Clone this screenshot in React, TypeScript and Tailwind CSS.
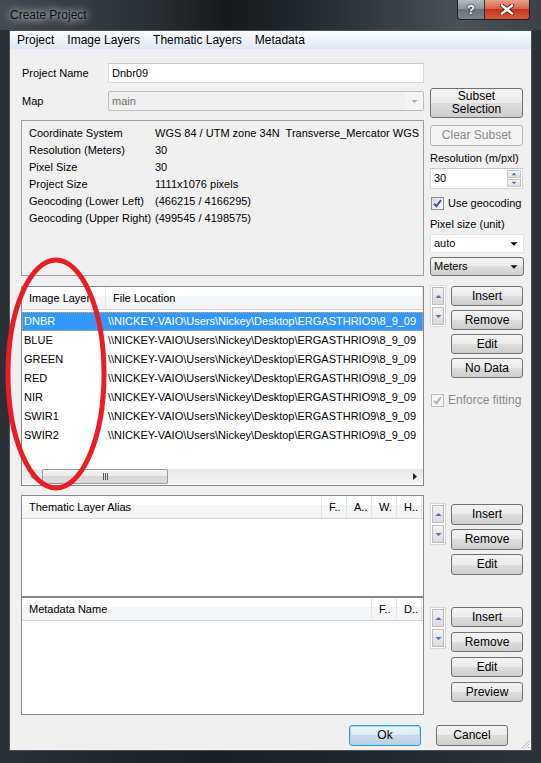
import React from 'react';

type Kids = { children?: React.ReactNode; className?: string };

const Button = ({ children, className = '', disabled = false, primary = false }: Kids & { disabled?: boolean; primary?: boolean }) => {
    const look = disabled
        ? 'border-[#b5b9bc] bg-[#f4f4f4] text-[#8a8a8a]'
        : primary
          ? 'border-[#2f9be0] bg-[linear-gradient(#eef5fa_0%,#dde9f2_50%,#cadbe8_50%,#bdd2e2_100%)] shadow-[inset_0_0_0_1px_#9fdcfb]'
          : 'border-[#707070] bg-[linear-gradient(#f4f4f4_0%,#ebebeb_50%,#dddddd_50%,#cfcfcf_100%)]';
    return (
        <div className={`flex items-center justify-center rounded-[3px] border text-center text-[12px] leading-[13px] ${look} ${className}`}>
            {children}
        </div>
    );
};

const Tri = ({ up = false, color = '#4a6cc8', w = 5 }: { up?: boolean; color?: string; w?: number }) => (
    <svg width={w + 2} height={w} viewBox="0 0 7 5">
        <path d={up ? 'M0.5 4 L3.5 1 L6.5 4 Z' : 'M0.5 1 L3.5 4 L6.5 1 Z'} fill={color} />
    </svg>
);

const ArrowPair = () => (
    <div className="flex h-[42px] w-[16px] flex-col gap-[2px] border border-[#d9d9d9] bg-white p-px">
        <div className="flex h-[18px] items-center justify-center border border-[#bdbdbd] bg-[linear-gradient(#f2f2f2,#dadada)]">
            <Tri up />
        </div>
        <div className="flex h-[18px] items-center justify-center border border-[#bdbdbd] bg-[linear-gradient(#f2f2f2,#dadada)]">
            <Tri />
        </div>
    </div>
);

const Check = ({ disabled = false }: { disabled?: boolean }) => (
    <div
        className={`flex h-[13px] w-[13px] shrink-0 items-center justify-center border ${
            disabled ? 'border-[#bcbcbc] bg-[#f4f4f4]' : 'border-[#8e8f8f] bg-[linear-gradient(135deg,#d8d8d8,#ffffff)]'
        }`}
    >
        <svg width="9" height="9" viewBox="0 0 9 9">
            <path
                d="M1 4.6 L3.4 7.2 L8 1.2"
                stroke={disabled ? '#b4b4b4' : '#3657a6'}
                strokeWidth="1.9"
                fill="none"
                strokeLinejoin="miter"
            />
        </svg>
    </div>
);

type Col = { label: string; w?: string };

const ListHeader = ({ cols }: { cols: Col[] }) => (
    <div className="flex h-[23px] shrink-0 border-b border-[#d5d5d5] bg-[linear-gradient(#ffffff_0%,#ffffff_42%,#f4f5f7_42%,#f4f5f7_100%)]">
        {cols.map((c, i) => (
            <div
                key={i}
                className={`flex items-center overflow-hidden whitespace-nowrap border-r border-[#e3e4e6] pl-[7px] ${c.w ?? 'flex-1'}`}
            >
                {c.label}
            </div>
        ))}
    </div>
);

const path = '\\\\NICKEY-VAIO\\Users\\Nickey\\Desktop\\ERGASTHRIO9\\8_9_09';
const layers = ['DNBR', 'BLUE', 'GREEN', 'RED', 'NIR', 'SWIR1', 'SWIR2'];

const info: [string, string][] = [
    ['Coordinate System', 'WGS 84 / UTM zone 34N  Transverse_Mercator WGS'],
    ['Resolution (Meters)', '30'],
    ['Pixel Size', '30'],
    ['Project Size', '1111x1076 pixels'],
    ['Geocoding (Lower Left)', '(466215 / 4166295)'],
    ['Geocoding (Upper Right)', '(499545 / 4198575)'],
];

export default function App() {
    return (
        <div className="relative h-[763px] w-[541px] overflow-hidden bg-[linear-gradient(90deg,#2a3035_0%,#1a1f23_40%,#22282d_70%,#2c3237_100%)] font-['Liberation_Sans',Arial,sans-serif] text-[11px] text-black">
            {/* title bar */}
            <div className="flex h-[30px] items-start justify-between bg-[linear-gradient(90deg,#454a4f_0%,#2a2f33_28%,#15191c_42%,#2a3035_62%,#4b5156_85%,#3c4247_100%)] pl-[10px] pr-[11px]">
                <div className="mt-[7px] text-[12px] leading-[16px] text-[#111] [text-shadow:0_0_6px_rgba(255,255,255,0.85),0_0_12px_rgba(255,255,255,0.6),0_0_18px_rgba(255,255,255,0.4)]">
                    Create Project
                </div>
                <div className="flex h-[20px] overflow-hidden rounded-b-[4px] border border-t-0 border-[#1b1f22]">
                    <div className="flex w-[27px] items-center justify-center border-r border-[#2a2e31] bg-[linear-gradient(#b5bbc0_0%,#8a9197_50%,#6a7177_50%,#7d858b_100%)] text-[13px] font-bold text-white [text-shadow:0_0_2px_#222,0_0_1px_#000]">
                        ?
                    </div>
                    <div className="flex w-[44px] items-center justify-center bg-[linear-gradient(#e9a08c_0%,#d86448_45%,#c5361a_50%,#d65a36_100%)]">
                        <svg width="14" height="11" viewBox="0 0 14 11">
                            <path d="M2 1.5 L12 9.5 M12 1.5 L2 9.5" stroke="#5a1a0c" strokeWidth="4.2" strokeLinecap="square" />
                            <path d="M2 1.5 L12 9.5 M12 1.5 L2 9.5" stroke="#ffffff" strokeWidth="2.4" strokeLinecap="square" />
                        </svg>
                    </div>
                </div>
            </div>

            {/* client area */}
            <div className="relative mx-[9px] flex h-[721px] flex-col border border-[#4a5157] bg-[#f0f0f0]">
                {/* menu bar */}
                <div className="flex h-[18px] shrink-0 items-center gap-[13px] bg-[linear-gradient(#fbfcfe,#dfe7f4)] pl-[7px] text-[12px]">
                    <span>Project</span>
                    <span>Image Layers</span>
                    <span>Thematic Layers</span>
                    <span>Metadata</span>
                </div>

                <div className="flex flex-col pl-[11px] pr-[7px] pt-[14px]">
                    {/* project section */}
                    <div className="flex gap-[6px]">
                        <div className="flex w-[403px] flex-col">
                            <div className="flex h-[20px] items-center">
                                <div className="w-[87px] pl-px">Project Name</div>
                                <div className="flex h-[20px] flex-1 items-center border border-[#d6d9dd] border-t-[#c5c9ce] bg-white pl-[3px]">
                                    Dnbr09
                                </div>
                            </div>
                            <div className="mt-[8px] flex h-[20px] items-center">
                                <div className="w-[87px] pl-px">Map</div>
                                <div className="flex h-[20px] flex-1 items-center rounded-[2px] border border-[#bcc0c4] bg-[#f0f0f0]">
                                    <div className="flex-1 pl-[3px] text-[#6d6d6d]">main</div>
                                    <div className="flex h-full w-[18px] items-center justify-center bg-[#f4f4f4]">
                                        <Tri color="#a8a8a8" />
                                    </div>
                                </div>
                            </div>
                            <div className="mt-[9px] h-[156px] border border-[#a0a0a0] pl-[7px] pt-[4px]">
                                {info.map(([k, v]) => (
                                    <div key={k} className="flex h-[17px] items-center">
                                        <div className="w-[126px] shrink-0 whitespace-nowrap">{k}</div>
                                        <div className="whitespace-pre">{v}</div>
                                    </div>
                                ))}
                            </div>
                        </div>

                        <div className="flex w-[94px] flex-col">
                            <Button className="mt-[25px] h-[30px] w-[93px]">
                                Subset
                                <br />
                                Selection
                            </Button>
                            <Button disabled className="mt-[7px] h-[21px] w-[93px]">
                                Clear Subset
                            </Button>
                            <div className="mt-[5px] h-[14px] whitespace-nowrap leading-[14px]">Resolution (m/pxl)</div>
                            <div className="mt-[3px] flex h-[21px] w-[93px] items-center border border-[#d6d9dd] border-t-[#c5c9ce] bg-white">
                                <div className="flex-1 pl-[3px]">30</div>
                                <div className="mr-px flex flex-col gap-px">
                                    <div className="flex h-[8px] w-[14px] items-center justify-center border border-[#c7c7c7] bg-[linear-gradient(#f6f6f6,#dedede)]">
                                        <Tri up w={4} />
                                    </div>
                                    <div className="flex h-[8px] w-[14px] items-center justify-center border border-[#c7c7c7] bg-[linear-gradient(#f6f6f6,#dedede)]">
                                        <Tri w={4} />
                                    </div>
                                </div>
                            </div>
                            <div className="mt-[7px] flex h-[14px] items-center gap-[4px] pl-px">
                                <Check />
                                <span className="whitespace-nowrap">Use geocoding</span>
                            </div>
                            <div className="mt-[7px] h-[14px] whitespace-nowrap leading-[14px]">Pixel size (unit)</div>
                            <div className="mt-[3px] flex h-[19px] w-[94px] items-center border border-[#e2e3e5] bg-white">
                                <div className="flex-1 pl-[3px]">auto</div>
                                <div className="mr-[5px]">
                                    <Tri color="#000" w={6} />
                                </div>
                            </div>
                            <div className="mt-[4px] flex h-[19px] w-[94px] items-center rounded-[3px] border border-[#707070] bg-[linear-gradient(#f4f4f4_0%,#ebebeb_50%,#dddddd_50%,#cfcfcf_100%)]">
                                <div className="flex-1 pl-[3px]">Meters</div>
                                <div className="mr-[5px]">
                                    <Tri color="#000" w={6} />
                                </div>
                            </div>
                        </div>
                    </div>

                    {/* image layers section */}
                    <div className="mt-[10px] flex gap-[6px]">
                        <div className="flex h-[200px] w-[403px] flex-col border border-[#828790] bg-white">
                            <ListHeader cols={[{ label: 'Image Layer', w: 'w-[84px]' }, { label: 'File Location' }]} />
                            <div className="flex-1 pt-[2px]">
                                {layers.map((l, i) => (
                                    <div
                                        key={l}
                                        className={`flex h-[19px] items-center overflow-hidden whitespace-nowrap border ${
                                            i === 0 ? 'border-dotted border-[#f0a050] bg-[#3399ff] text-white' : 'border-transparent'
                                        }`}
                                    >
                                        <div className="w-[84px] shrink-0 pl-px">{l}</div>
                                        <div className="pl-[1px]">{path}</div>
                                    </div>
                                ))}
                            </div>
                            <div className="mb-px flex h-[15px] shrink-0 items-center bg-[linear-gradient(#e8e8e8,#f4f4f4)]">
                                <div className="flex w-[20px] items-center justify-center">
                                    <svg width="4" height="7" viewBox="0 0 4 7">
                                        <path d="M4 0 L0 3.5 L4 7 Z" fill="#9a9a9a" />
                                    </svg>
                                </div>
                                <div className="flex h-[15px] w-[126px] items-center justify-center gap-px rounded-[2px] border border-[#9a9a9a] bg-[linear-gradient(#f6f6f6_0%,#e8e8e8_50%,#d6d6d6_50%,#dcdcdc_100%)]">
                                    <div className="h-[7px] w-px bg-[#555]" />
                                    <div className="h-[7px] w-px bg-[#555]" />
                                    <div className="h-[7px] w-px bg-[#555]" />
                                </div>
                                <div className="flex-1" />
                                <div className="flex w-[16px] items-center justify-center">
                                    <svg width="4" height="7" viewBox="0 0 4 7">
                                        <path d="M0 0 L4 3.5 L0 7 Z" fill="#222" />
                                    </svg>
                                </div>
                            </div>
                        </div>

                        <div className="flex w-[94px] flex-col">
                            <div className="flex gap-[5px]">
                                <div className="-mt-px">
                                    <ArrowPair />
                                </div>
                                <div className="flex w-[72px] flex-col gap-[4px]">
                                    <Button className="h-[20px]">Insert</Button>
                                    <Button className="h-[20px]">Remove</Button>
                                    <Button className="h-[20px]">Edit</Button>
                                    <Button className="h-[20px]">No Data</Button>
                                </div>
                            </div>
                            <div className="mt-[15px] flex h-[14px] items-center gap-[4px] pl-px text-[#8a8a8a]">
                                <Check disabled />
                                <span className="whitespace-nowrap text-[12px]">Enforce fitting</span>
                            </div>
                        </div>
                    </div>

                    {/* thematic layers */}
                    <div className="mt-[9px] flex gap-[6px]">
                        <div className="flex h-[103px] w-[403px] flex-col border border-b-2 border-[#828790] bg-white">
                            <ListHeader
                                cols={[
                                    { label: 'Thematic Layer Alias', w: 'w-[300px]' },
                                    { label: 'F..', w: 'w-[25px]' },
                                    { label: 'A..', w: 'w-[25px]' },
                                    { label: 'W.', w: 'w-[25px]' },
                                    { label: 'H..', w: 'w-[25px]' },
                                ]}
                            />
                        </div>
                        <div className="flex w-[94px] gap-[5px] pt-[8px]">
                            <div>
                                <ArrowPair />
                            </div>
                            <div className="flex w-[72px] flex-col gap-[4px] pt-px">
                                <Button className="h-[21px]">Insert</Button>
                                <Button className="h-[21px]">Remove</Button>
                                <Button className="h-[21px]">Edit</Button>
                            </div>
                        </div>
                    </div>

                    {/* metadata */}
                    <div className="flex gap-[6px]">
                        <div className="flex h-[117px] w-[403px] flex-col border border-t-0 border-[#828790] bg-white">
                            <ListHeader
                                cols={[
                                    { label: 'Metadata Name', w: 'w-[350px]' },
                                    { label: 'F..', w: 'w-[25px]' },
                                    { label: 'D..', w: 'w-[25px]' },
                                ]}
                            />
                        </div>
                        <div className="flex w-[94px] gap-[5px] pt-[9px]">
                            <div>
                                <ArrowPair />
                            </div>
                            <div className="flex w-[72px] flex-col gap-[5px]">
                                <Button className="h-[20px]">Insert</Button>
                                <Button className="h-[20px]">Remove</Button>
                                <Button className="h-[20px]">Edit</Button>
                                <Button className="h-[20px]">Preview</Button>
                            </div>
                        </div>
                    </div>

                    {/* dialog buttons */}
                    <div className="mt-[10px] flex justify-end gap-[15px] pr-[16px]">
                        <Button primary className="h-[21px] w-[72px]">
                            Ok
                        </Button>
                        <Button className="h-[21px] w-[72px]">Cancel</Button>
                    </div>
                </div>

                {/* size grip */}
                <svg className="absolute bottom-px right-px" width="10" height="10" viewBox="0 0 10 10">
                    <path d="M9 2 L2 9 M9 5 L5 9 M9 8 L8 9" stroke="#b8b8b8" strokeWidth="1" />
                </svg>
            </div>

            {/* red annotation ellipse */}
            <svg className="pointer-events-none absolute left-0 top-0" width="541" height="763" viewBox="0 0 541 763">
                <ellipse cx="56" cy="374" rx="48" ry="114" fill="none" stroke="#ec1c24" strokeWidth="5" />
            </svg>
        </div>
    );
}
